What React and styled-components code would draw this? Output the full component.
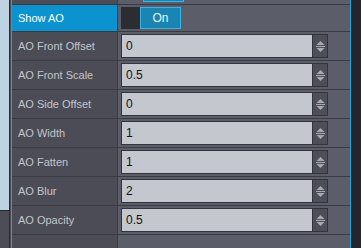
import React from 'react';
import styled, {createGlobalStyle} from 'styled-components';

const GlobalStyle = createGlobalStyle`
  html, body {
    margin: 0;
    padding: 0;
    background-color: #25262b;
  }
  body {
    font-family: "Liberation Sans", Arial, sans-serif;
    font-size: 11px;
  }
`

const StyledDivPage = styled.div`
  display: flex;
  width: 361px;
  height: 248px;
  overflow: hidden;
  background-color: #25262b;
`
const StyledDivSide = styled.div`
  display: flex;
  flex-direction: column;
  width: 9px;
  border-right: 1px solid #2b2c31;
`
const StyledDivSideTop = styled.div`
  height: 210px;
  background-color: #bdd3e1;
`
const StyledDivSideBottom = styled.div`
  flex-grow: 1;
  border-top: 1px solid #2b2c31;
  background-color: #4c4d56;
`
const StyledDivPanel = styled.div`
  display: flex;
  flex-direction: column;
  width: 339px;
  border-left: 1px solid #4c4d56;
  border-right: 1px solid #1fa6e0;
`
const StyledDivGrid = styled.div`
  flex-grow: 1;
  display: flex;
  flex-direction: column;
  border-left: 1px solid #2a9fd6;
  background-color: #5b5d69;
`
const StyledDivRow = styled.div`
  display: grid;
  grid-template-columns: 106px 231px;
  height: ${props => props.h}px;
  border-bottom: ${props => props.last ? 'none' : '1px solid #3a3b43'};
  flex-shrink: 0;
  flex-grow: ${props => props.last ? 1 : 0};
`
const StyledDivLabel = styled.div`
  display: flex;
  align-items: center;
  padding-left: 6px;
  border-right: 1px solid #3a3b43;
  background-color: ${props => props.active ? '#0a93cf' : '#4b4c56'};
  color: ${props => props.active ? '#ffffff' : '#c3c5ca'};
  white-space: nowrap;
`
const StyledDivValue = styled.div`
  display: flex;
  align-items: center;
  padding-left: 3px;
`
const StyledDivToggleStub = styled.div`
  align-self: flex-start;
  margin-left: 22px;
  width: 39px;
  height: 1px;
  background-color: #1a85b3;
  border: 1px solid #3ab4e8;
  border-top: none;
`
const StyledDivToggle = styled.div`
  display: flex;
  height: 22px;
`
const StyledDivToggleOff = styled.div`
  width: 19px;
  background-color: #2c2d32;
`
const StyledDivToggleOn = styled.div`
  width: 39px;
  display: flex;
  align-items: center;
  justify-content: center;
  background-color: #1a85b3;
  border: 1px solid #3ab4e8;
  color: #e8f4fa;
  font-size: 12px;
`
const StyledDivField = styled.div`
  display: flex;
  width: 207px;
  height: 24px;
  box-sizing: border-box;
  border: 1px solid #33343a;
`
const StyledDivInput = styled.div`
  flex-grow: 1;
  display: flex;
  align-items: center;
  padding-left: 4px;
  background-color: #c4c7cd;
  color: #111216;
  font-size: 12px;
`
const StyledDivSpinner = styled.div`
  width: 14px;
  display: flex;
  align-items: center;
  justify-content: center;
  border-left: 1px solid #33343a;
  background-color: #4d4e58;
`

const SpinIcon = () => (
  <svg width="9" height="13" viewBox="0 0 9 13">
    <path d="M0.5 5 L4.5 1 L8.5 5 Z" fill="#a9abb2" />
    <rect x="0" y="6" width="9" height="1" fill="#a9abb2" />
    <path d="M0.5 8 L8.5 8 L4.5 12 Z" fill="#a9abb2" />
  </svg>
);

const rows = [
  {label: 'AO Front Offset', value: '0'},
  {label: 'AO Front Scale', value: '0.5'},
  {label: 'AO Side Offset', value: '0'},
  {label: 'AO Width', value: '1'},
  {label: 'AO Fatten', value: '1'},
  {label: 'AO Blur', value: '2'},
  {label: 'AO Opacity', value: '0.5'},
];

export default class App extends React.Component {
  render() {
    return (
      <StyledDivPage>
        <GlobalStyle />
        <StyledDivSide>
          <StyledDivSideTop />
          <StyledDivSideBottom />
        </StyledDivSide>

        <StyledDivPanel>
          <StyledDivGrid>
            <StyledDivRow h={4}>
              <StyledDivLabel />
              <StyledDivValue>
                <StyledDivToggleStub />
              </StyledDivValue>
            </StyledDivRow>

            <StyledDivRow h={26}>
              <StyledDivLabel active>Show AO</StyledDivLabel>
              <StyledDivValue>
                <StyledDivToggle>
                  <StyledDivToggleOff />
                  <StyledDivToggleOn>On</StyledDivToggleOn>
                </StyledDivToggle>
              </StyledDivValue>
            </StyledDivRow>

            {rows.map(r => (
              <StyledDivRow h={28} key={r.label}>
                <StyledDivLabel>{r.label}</StyledDivLabel>
                <StyledDivValue>
                  <StyledDivField>
                    <StyledDivInput>{r.value}</StyledDivInput>
                    <StyledDivSpinner><SpinIcon /></StyledDivSpinner>
                  </StyledDivField>
                </StyledDivValue>
              </StyledDivRow>
            ))}

            <StyledDivRow h={14} last>
              <StyledDivLabel />
              <StyledDivValue />
            </StyledDivRow>
          </StyledDivGrid>
        </StyledDivPanel>
      </StyledDivPage>
    );
  }
}
